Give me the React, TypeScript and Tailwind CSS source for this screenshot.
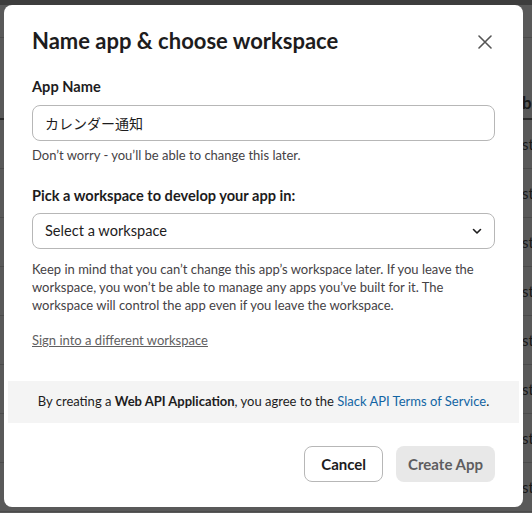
import React from "react";

const font = { fontFamily: "Lato, 'Noto Sans CJK JP', sans-serif" };

function Backdrop() {
  const rows = Array.from({ length: 8 });
  return (
    <div className="absolute inset-0 bg-[#595959]">
      <div className="h-[5px] bg-[#3d3d3d]" />
      <div className="h-[33px] border-b border-[#4b4b4b]" />
      <div className="h-[82px] border-b-2 border-[#2a2a2a] flex items-end justify-end pb-[3px]">
        <span className="text-[17px] font-bold text-[#1a1a1a] w-[10px] overflow-hidden">b</span>
      </div>
      {rows.map((_, i) => (
        <div key={i} className="h-[49px] border-b border-[#4b4b4b] flex items-center justify-end">
          <span className="text-[15px] text-[#1a1a1a] w-[10px] overflow-hidden">st</span>
        </div>
      ))}
    </div>
  );
}

export default function App() {
  return (
    <div className="relative w-[532px] h-[513px] overflow-hidden" style={font}>
      <Backdrop />
      <div className="absolute left-[4px] top-[5px] w-[519px] h-[502px] bg-white rounded-[8px] flex flex-col pt-[22px]">
        <div className="px-7 flex items-start justify-between">
          <h1 className="text-[22px] leading-[28px] font-bold text-[#1d1c1d]">Name app &amp; choose workspace</h1>
          <button className="mt-[8px] mr-[3px] text-[#555]">
            <svg width="14" height="14" viewBox="0 0 14 14">
              <path d="M1 1L13 13M13 1L1 13" stroke="#555" strokeWidth="1.6" strokeLinecap="round" />
            </svg>
          </button>
        </div>

        <div className="px-7 mt-[21px]">
          <label className="block text-[14.6px] leading-[22px] font-bold text-[#1d1c1d]">App Name</label>
          <div className="mt-[7px] h-[36px] border border-[#b7b7b7] rounded-[8px] flex items-center px-[12px] text-[14px] text-[#1d1c1d]">
            カレンダー通知
          </div>
          <p className="mt-[5px] text-[13px] leading-[18px] text-[#454245]">Don’t worry - you’ll be able to change this later.</p>

          <label className="block mt-[21px] text-[14.6px] leading-[22px] font-bold text-[#1d1c1d]">
            Pick a workspace to develop your app in:
          </label>
          <div className="mt-[6px] h-[36px] border border-[#b7b7b7] rounded-[8px] flex items-center justify-between pl-[12px] pr-[12px] text-[14.6px] text-[#1d1c1d]">
            <span>Select a workspace</span>
            <svg width="10" height="8" viewBox="0 0 10 8">
              <path d="M1.5 2.5L5 6L8.5 2.5" fill="none" stroke="#1d1c1d" strokeWidth="1.6" strokeLinecap="round" strokeLinejoin="round" />
            </svg>
          </div>
          <p className="mt-[11px] text-[13px] leading-[18px] text-[#454245]">
            Keep in mind that you can’t change this app’s workspace later. If you leave the workspace, you won’t be able to manage any apps you’ve built for it. The workspace will control the app even if you leave the workspace.
          </p>
          <a href="#" className="block mt-[17px] text-[13px] leading-[18px] text-[#616061] underline">
            Sign into a different workspace
          </a>
        </div>

        <div className="mx-[4px] mt-[32px] h-[42px] bg-[#f4f4f4] flex items-center justify-center text-[13px] text-[#1d1c1d]">
          <span>
            By creating a <b>Web API Application</b>, you agree to the{" "}
            <a href="#" className="text-[#1264a3]">Slack API Terms of Service</a>.
          </span>
        </div>

        <div className="px-7 mt-[23px] flex justify-end gap-[13px]">
          <button className="h-[36px] px-[16px] border border-[#b7b7b7] rounded-[8px] bg-white text-[15px] font-bold text-[#1d1c1d]">
            Cancel
          </button>
          <button className="h-[36px] px-[12px] rounded-[8px] bg-[#e8e8e8] text-[15px] font-bold text-[#5e5d60]">
            Create App
          </button>
        </div>
      </div>
    </div>
  );
}
